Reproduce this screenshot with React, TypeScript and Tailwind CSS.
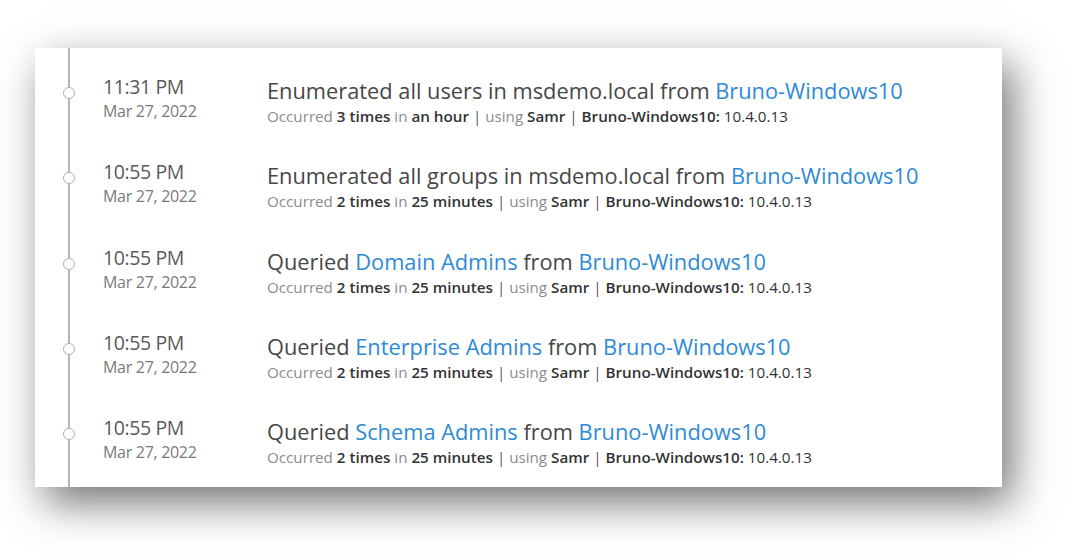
import React from 'react';

type Part = { text: string; link?: boolean };

interface Activity {
  time: string;
  date: string;
  title: Part[];
  count: string;
  span: string;
}

const activities: Activity[] = [
  {
    time: '11:31 PM',
    date: 'Mar 27, 2022',
    title: [{ text: 'Enumerated all users in msdemo.local from ' }, { text: 'Bruno-Windows10', link: true }],
    count: '3 times',
    span: 'an hour',
  },
  {
    time: '10:55 PM',
    date: 'Mar 27, 2022',
    title: [{ text: 'Enumerated all groups in msdemo.local from ' }, { text: 'Bruno-Windows10', link: true }],
    count: '2 times',
    span: '25 minutes',
  },
  {
    time: '10:55 PM',
    date: 'Mar 27, 2022',
    title: [
      { text: 'Queried ' },
      { text: 'Domain Admins', link: true },
      { text: ' from ' },
      { text: 'Bruno-Windows10', link: true },
    ],
    count: '2 times',
    span: '25 minutes',
  },
  {
    time: '10:55 PM',
    date: 'Mar 27, 2022',
    title: [
      { text: 'Queried ' },
      { text: 'Enterprise Admins', link: true },
      { text: ' from ' },
      { text: 'Bruno-Windows10', link: true },
    ],
    count: '2 times',
    span: '25 minutes',
  },
  {
    time: '10:55 PM',
    date: 'Mar 27, 2022',
    title: [
      { text: 'Queried ' },
      { text: 'Schema Admins', link: true },
      { text: ' from ' },
      { text: 'Bruno-Windows10', link: true },
    ],
    count: '2 times',
    span: '25 minutes',
  },
];

const Row: React.FC<{ item: Activity }> = ({ item }) => (
  <div className="flex h-[85.25px] items-start">
    {/* timeline dot */}
    <div className="flex w-[68px] shrink-0 justify-start pl-[28px] pt-[32px]">
      <div className="relative z-10 h-[12px] w-[12px] rounded-full border-[1.5px] border-[#b0b0b0] bg-white" />
    </div>

    <div className="w-[164px] shrink-0 pt-[20px]">
      <div className="text-[19.5px] leading-[24px] tracking-[-0.4px] text-[#5a5a5a]">{item.time}</div>
      <div className="text-[16px] leading-[24px] tracking-[-0.3px] text-[#7a7a7a]">{item.date}</div>
    </div>

    <div className="pt-[22px]">
      <div className="text-[21.8px] leading-[28px] text-[#474747]">
        {item.title.map((p, i) =>
          p.link ? (
            <span key={i} className="text-[#2f8ad6]">
              {p.text}
            </span>
          ) : (
            <span key={i}>{p.text}</span>
          )
        )}
      </div>
      <div className="mt-[1px] text-[15.2px] leading-[20px] text-[#8c8c8c]">
        Occurred <span className="font-semibold text-[#333]">{item.count}</span> in{' '}
        <span className="font-semibold text-[#333]">{item.span}</span> <span className="text-[#555]">|</span> using{' '}
        <span className="font-semibold text-[#333]">Samr</span> <span className="text-[#555]">|</span>{' '}
        <span className="font-semibold text-[#333]">Bruno-Windows10:</span>{' '}
        <span className="text-[#333]">10.4.0.13</span>
      </div>
    </div>
  </div>
);

export default function App() {
  return (
    <div
      className="h-[558px] w-[1067px] overflow-hidden bg-white pl-[35px] pt-[48px]"
      style={{ fontFamily: '"Open Sans", "Noto Sans", sans-serif' }}
    >
      <div className="relative h-[439px] w-[967px] bg-white pt-[7px] shadow-[10px_16px_40px_rgba(0,0,0,0.55)]">
        {/* vertical timeline */}
        <div className="absolute bottom-0 left-[33px] top-0 w-[2px] bg-[#b4b4b4]" />
        {activities.map((a, i) => (
          <Row key={i} item={a} />
        ))}
      </div>
    </div>
  );
}
